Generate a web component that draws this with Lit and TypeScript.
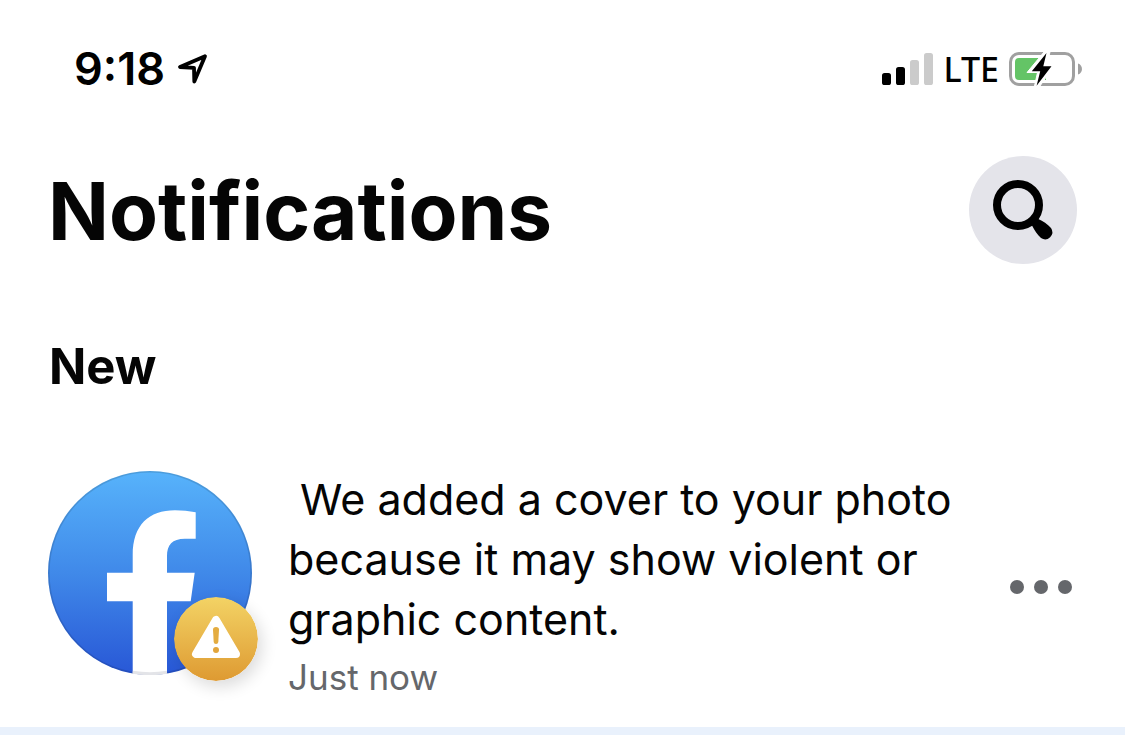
import { LitElement, html, css } from "lit";
import { customElement, property } from "lit/decorators.js";

@customElement("status-bar")
class StatusBar extends LitElement {
  static styles = css`
    :host {
      display: flex;
      justify-content: space-between;
      align-items: center;
      padding: 48px 42px 0 74px;
      line-height: 42px;
    }
    .group {
      display: flex;
      align-items: center;
      gap: 12px;
    }
    .signal {
      gap: 10px;
    }
    .time {
      font-size: 45px;
      font-weight: 600;
    }
    .network {
      font-family: "Noto Sans", sans-serif;
      font-size: 34px;
      font-weight: 500;
    }
    svg {
      display: block;
    }
  `;

  render() {
    return html`
      <div class="group">
        <span class="time">9:18</span>
        <svg width="32" height="32" viewBox="0 0 32 32" aria-hidden="true">
          <path
            d="M28 3.200 3 14 17 14.800 17.300 28.500Z"
            fill="none"
            stroke="#000"
            stroke-width="3.8"
            stroke-linejoin="round"
          />
        </svg>
      </div>
      <div class="group signal">
        <svg width="51" height="32" viewBox="0 0 51 32" aria-hidden="true">
          <rect x="0" y="20" width="9" height="12" rx="2.6" />
          <rect x="14" y="14" width="9" height="18" rx="2.6" />
          <rect x="28" y="7" width="9" height="25" rx="2.6" fill="#cbcbcb" />
          <rect x="42" y="0" width="9" height="32" rx="2.6" fill="#cbcbcb" />
        </svg>
        <span class="network">LTE</span>
        <svg width="74" height="36" viewBox="0 0 74 36" aria-hidden="true">
          <rect x="1.5" y="2.5" width="63" height="31" rx="8.5" fill="none" stroke="#a0a0a0" stroke-width="3" />
          <path d="M69 12.5C74.3 14 74.3 22 69 23.5Z" fill="#a0a0a0" />
          <path d="M10 7H37V29H10Q6 29 6 25V11Q6 7 10 7Z" fill="#64c466" />
          <path d="M35 1 18 21.5H28.500L25.500 35H31L45 14.5H37.5L41 1Z" fill="#fff" stroke="#fff" stroke-width="1" />
          <path d="M37.5 2 22.8 20.3H31.2L27.6 34.8 42.5 15.3H34.3Z" />
        </svg>
      </div>
    `;
  }
}

@customElement("notification-item")
class NotificationItem extends LitElement {
  @property() message = "";
  @property() time = "";

  static styles = css`
    :host {
      display: flex;
      align-items: flex-start;
      gap: 36px;
      padding: 22px 48px;
    }
    .avatar {
      position: relative;
      flex: none;
      margin-top: 2px;
    }
    .avatar svg {
      display: block;
    }
    .badge {
      position: absolute;
      right: -6px;
      bottom: -6px;
      border-radius: 50%;
      box-shadow: 4px 6px 16px rgba(0, 0, 0, 0.14);
    }
    .body {
      flex: 1;
      min-width: 0;
    }
    .message,
    .time {
      margin: 0;
    }
    .message {
      font-size: 43px;
      line-height: 60px;
      color: #050505;
      white-space: pre-wrap;
    }
    .time {
      font-size: 35px;
      line-height: 56px;
      color: #65676b;
    }
    .menu {
      align-self: center;
      display: flex;
      justify-content: center;
      align-items: center;
      width: 72px;
      height: 72px;
      margin: 0;
      padding: 0;
      border: 0;
      background: none;
      cursor: pointer;
    }
  `;

  render() {
    return html`
      <div class="avatar">
        <svg width="204" height="204" viewBox="0 0 204 204" role="img" aria-label="Facebook">
          <defs>
            <linearGradient id="blue" x1="0" y1="0" x2="0" y2="1">
              <stop offset="0" stop-color="#57b3fb" />
              <stop offset="0.5" stop-color="#4089e9" />
              <stop offset="1" stop-color="#2857d6" />
            </linearGradient>
            <clipPath id="disc"><circle cx="102" cy="102" r="102" /></clipPath>
          </defs>
          <g clip-path="url(#disc)">
            <rect width="204" height="204" fill="url(#blue)" />
            <path
              d="M84.7 204V130.3H59V101.7H84.7V84C84.7 54 101 39.3 127 39.3 134 39.3 141 40 147.7 41.3V67.7H137C124 67.7 119 74 119 85V101.7H146.7L142.7 130.3H119V204Z"
              fill="#fff"
            />
          </g>
          <circle cx="102" cy="102" r="101.2" fill="none" stroke="#000" stroke-opacity="0.12" stroke-width="1.6" />
          <path d="M84.7 201.300Q102 204 119 201.300" fill="none" stroke="#e3e4e8" stroke-width="3" />
        </svg>
        <svg class="badge" width="84" height="84" viewBox="0 0 84 84" role="img" aria-label="Warning">
          <defs>
            <linearGradient id="amber" x1="0" y1="0" x2="0" y2="1">
              <stop offset="0" stop-color="#f3d365" />
              <stop offset="1" stop-color="#de9a32" />
            </linearGradient>
          </defs>
          <circle cx="42" cy="42" r="42" fill="url(#amber)" />
          <path d="M42 23 22 57H62Z" fill="#fff" stroke="#fff" stroke-width="8" stroke-linejoin="round" />
          <path
            d="M39 32.5Q39 30 42 30T45 32.5L44.3 45Q44.1 47 42 47T39.7 45Z"
            fill="#e4ac40"
          />
          <circle cx="42" cy="53" r="3" fill="#e2a53b" />
        </svg>
      </div>
      <div class="body">
        <p class="message">${this.message}</p>
        <p class="time">${this.time}</p>
      </div>
      <button class="menu" type="button" aria-label="More options">
        <svg width="62" height="14" viewBox="0 0 62 14" fill="#65676b" aria-hidden="true">
          <circle cx="7" cy="7" r="7" />
          <circle cx="31" cy="7" r="7" />
          <circle cx="55" cy="7" r="7" />
        </svg>
      </button>
    `;
  }
}

@customElement("app-root")
class AppRoot extends LitElement {
  static styles = css`
    :host {
      display: flex;
      flex-direction: column;
      min-height: 100vh;
      background: #fff;
      color: #000;
      font-family: Inter, "Liberation Sans", sans-serif;
    }
    .header {
      display: flex;
      justify-content: space-between;
      align-items: center;
      padding: 66px 48px 0;
    }
    h1,
    h2 {
      margin: 0;
      color: #050505;
    }
    h1 {
      padding-top: 2px;
      font-size: 80px;
      line-height: 98px;
      font-weight: 700;
    }
    h2 {
      padding: 73px 49px 50px;
      font-size: 49px;
      line-height: 60px;
      font-weight: 700;
    }
    .search {
      flex: none;
      width: 108px;
      height: 108px;
      padding: 0;
      border: 0;
      border-radius: 50%;
      background: #e4e4ea;
      cursor: pointer;
    }
    .search svg {
      display: block;
    }
    .unread {
      flex: 1;
      min-height: 8px;
      background: #e9f1fc;
    }
  `;

  render() {
    return html`
      <status-bar></status-bar>
      <header class="header">
        <h1>Notifications</h1>
        <button class="search" type="button" aria-label="Search">
          <svg width="108" height="108" viewBox="0 0 108 108" aria-hidden="true">
            <circle cx="49" cy="49" r="21" fill="none" stroke="#000" stroke-width="8" />
            <path d="M66 60 69.300 63C74 65 78.500 68 82 72A7.200 7.200 0 0 1 72 82C68 78.500 66 75 63.300 70L60 66Z" />
          </svg>
        </button>
      </header>
      <h2>New</h2>
      <notification-item
        .message=${"\u00a0We added a cover to your photo because it may show violent or graphic content."}
        .time=${"Just now"}
      ></notification-item>
      <div class="unread"></div>
    `;
  }
}
